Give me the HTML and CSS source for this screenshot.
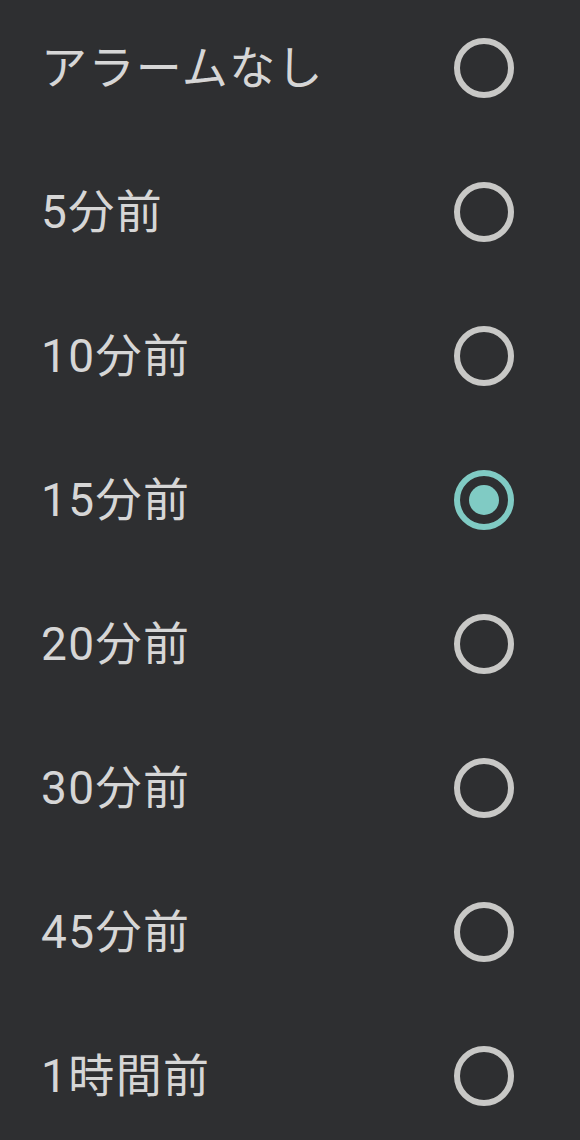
FILE: index.html
```html
<!DOCTYPE html>
<html lang="ja">
<head>
    <meta charset="UTF-8">
    <meta name="viewport" content="width=device-width, initial-scale=1.0">
    <title>アラーム</title>
    <link rel="stylesheet" href="styles.css">
</head>
<body>
    <ul class="alarm-list">
        <li class="alarm-item"><span class="label">アラームなし</span><span class="radio"></span></li>
        <li class="alarm-item"><span class="label">5分前</span><span class="radio"></span></li>
        <li class="alarm-item"><span class="label">10分前</span><span class="radio"></span></li>
        <li class="alarm-item"><span class="label">15分前</span><span class="radio checked"></span></li>
        <li class="alarm-item"><span class="label">20分前</span><span class="radio"></span></li>
        <li class="alarm-item"><span class="label">30分前</span><span class="radio"></span></li>
        <li class="alarm-item"><span class="label">45分前</span><span class="radio"></span></li>
        <li class="alarm-item"><span class="label">1時間前</span><span class="radio"></span></li>
    </ul>
</body>
</html>
```

FILE: styles.css
```css
html,body{margin:0;padding:0;background:#2e2f31;height:100%;overflow:hidden}
body{font-family:Roboto,"Noto Sans CJK JP",sans-serif;color:#d6d6d6}
.alarm-list{list-style:none;margin:-4px 0 0;padding:0}
.alarm-item{height:144px;display:flex;align-items:center;justify-content:space-between;padding:0 66px 0 41px}
.label{font-size:46px;line-height:1;letter-spacing:1.4px}
.radio{width:60px;height:60px;box-sizing:border-box;border:6px solid #c8c8c6;border-radius:50%;display:flex;align-items:center;justify-content:center}
.radio.checked{border-color:#80cbc4}
.radio.checked::after{content:"";width:30px;height:30px;border-radius:50%;background:#80cbc4}
```
